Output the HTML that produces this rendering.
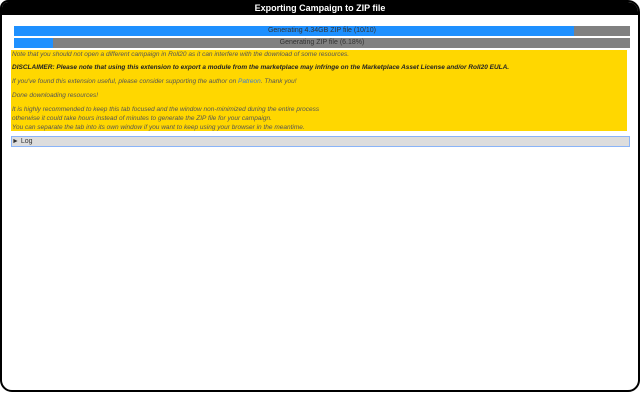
<!DOCTYPE html>
<html><head><style>
html,body{margin:0;padding:0;width:640px;height:400px;background:#fff;overflow:hidden;font-family:"Liberation Sans",sans-serif}
.win{position:absolute;left:0;top:0;width:636px;height:388px;border:2px solid #000;border-radius:8px 12px 12px 12px;background:#fff;overflow:hidden}
.title{position:absolute;left:0;top:0;right:0;height:13px;background:#000;color:#fff;font-weight:bold;font-size:9px;text-align:center;line-height:13px}
.bar{position:absolute;left:12px;width:616px;height:10px;background:#808080;font-size:7px;line-height:10px;text-align:center;color:#333}
.bar .f{position:absolute;left:0;top:0;bottom:0;background:#1e90ff}
.bar span{position:relative}
.y{position:absolute;left:9px;top:48px;width:616px;height:81px;background:#ffd700;font-size:6.5px;font-style:italic;color:#555;line-height:9px}
.y p{margin:0;position:absolute;left:1px;white-space:nowrap}
.log{position:absolute;left:9px;top:134px;width:617px;height:9px;background:#ddd;border:1px solid #8ab4f8;font-size:7px;line-height:9px;color:#333}
</style></head><body>
<div class="win">
<div class="title">Exporting Campaign to ZIP file</div>
<div class="bar" style="top:24px"><div class="f" style="width:560px"></div><span>Generating 4.34GB ZIP file (10/10)</span></div>
<div class="bar" style="top:36px"><div class="f" style="width:39px"></div><span>Generating ZIP file (6.18%)</span></div>
<div class="y">
<p style="top:0">Note that you should not open a different campaign in Roll20 as it can interfere with the download of some resources.</p>
<p style="top:13px;font-weight:bold;color:#222">DISCLAIMER: Please note that using this extension to export a module from the marketplace may infringe on the Marketplace Asset License and/or Roll20 EULA.</p>
<p style="top:27px">If you've found this extension useful, please consider supporting the author on <span style="color:#3b7dd8">Patreon</span>. Thank you!</p>
<p style="top:41px">Done downloading resources!</p>
<p style="top:55px">It is highly recommended to keep this tab focused and the window non-minimized during the entire process</p>
<p style="top:64px">otherwise it could take hours instead of minutes to generate the ZIP file for your campaign.</p>
<p style="top:73px">You can separate the tab into its own window if you want to keep using your browser in the meantime.</p>
</div>
<div class="log">&#9658; Log</div>
</div>
</body></html>
